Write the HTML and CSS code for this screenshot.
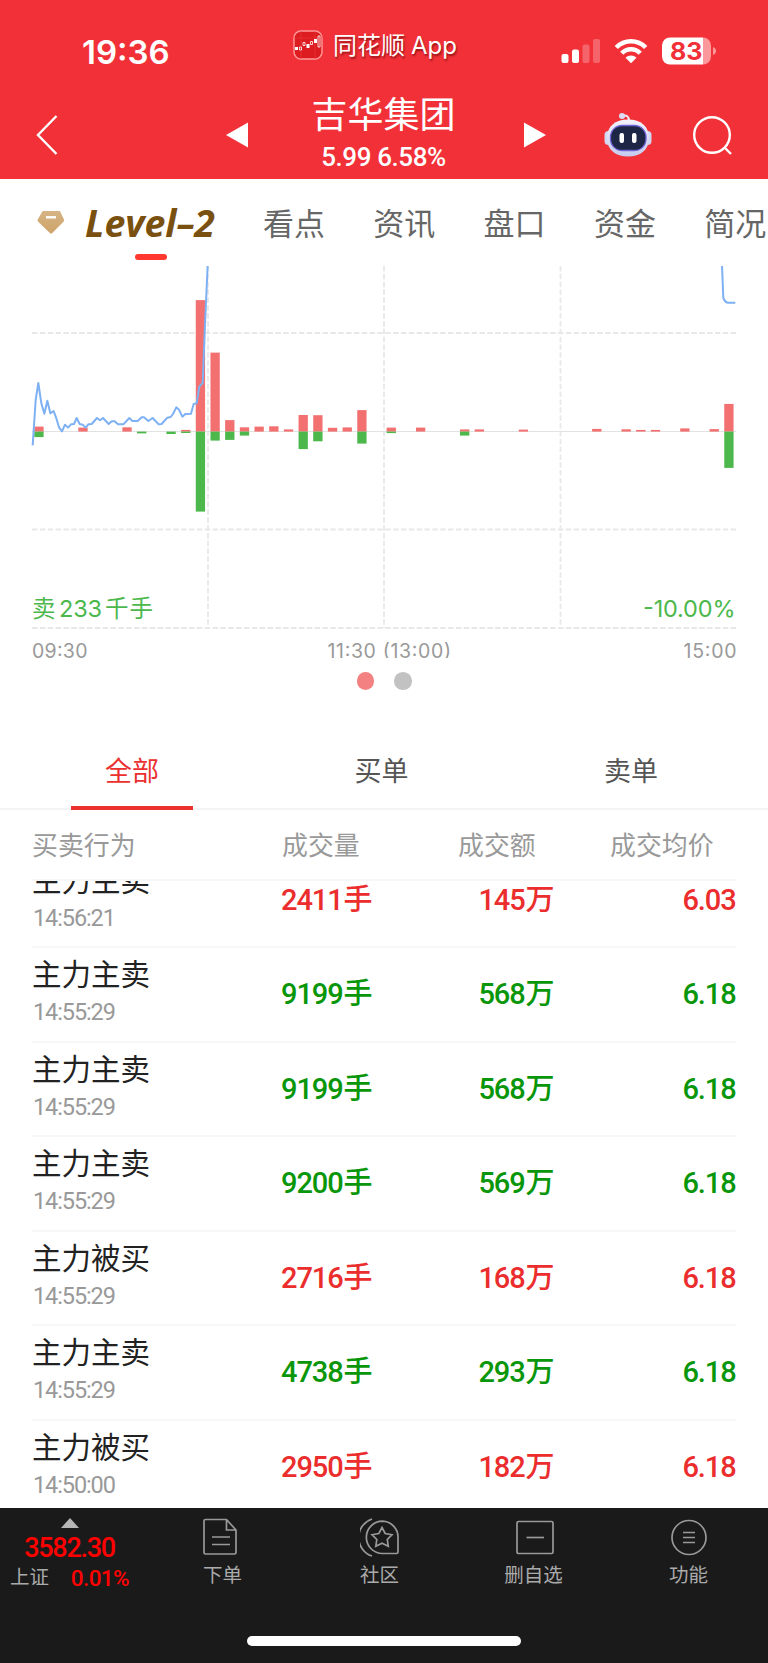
FILE: index.html
```html
<!DOCTYPE html>
<html lang="zh-CN">
<head>
  <meta charset="UTF-8" />
  <meta name="viewport" content="width=device-width, initial-scale=1.0"/>
  <title>吉华集团</title>
  <link rel="stylesheet" href="styles.css">
</head>
<body>

  <header class="header">
    <div class="status">
      <span class="clock">19:36</span>
      <div class="app">
        <svg class="app-icon" width="30" height="30" viewBox="0 0 30 30">
          <rect x="1" y="1" width="28" height="28" rx="7" fill="#dc1c20" stroke="#ff9a9a" stroke-width="1.4"/>
          <path d="M1 8h28M8 1v28M22 1v28" stroke="#ef3b3e" stroke-width=".6"/>
          <path d="M2 17h3v3H2zM13.500 14h3v4h-3zM21 9h3v4h-3z" fill="#fff"/>
          <path d="M6.500 17h2v3h-2zM10 12.500h2v3h-2zM17.500 11.500h2v3h-2zM25 6h2v11h-2z" fill="none" stroke="#fff" stroke-width=".8"/>
        </svg>
        <span>同花顺<i>App</i></span>
      </div>
      <svg class="signals" width="160" height="30" viewBox="0 0 160 30">
        <g fill="#fff">
          <rect x="1.500" y="17" width="7" height="9" rx="2"/>
          <rect x="12" y="12.500" width="7" height="13.500" rx="2"/>
          <rect x="22.500" y="7.500" width="7" height="18.500" rx="2" opacity=".25"/>
          <rect x="33" y="2" width="7" height="24" rx="2" opacity=".25"/>
        </g>
        <g fill="none" stroke="#fff" stroke-width="4.600">
          <path d="M56.300 10.500a20.500 20.500 0 0 1 29.400 0"/>
          <path d="M61.800 16.300a12.600 12.600 0 0 1 18.400 0"/>
        </g>
        <path d="M65.500 20.800a7.500 7.500 0 0 1 11 0L71 26.200z" fill="#fff"/>
        <path d="M110 .500h33v27h-33a8 8 0 0 1-8-8v-11a8 8 0 0 1 8-8z" fill="#fff"/>
        <path d="M143 .500a8 8 0 0 1 8 8v11a8 8 0 0 1-8 8z" fill="#fa989c"/>
        <path d="M153 10q3 1.200 3 4t-3 4z" fill="#fa989c"/>
        <text x="110" y="22.500" textLength="32.500" lengthAdjust="spacingAndGlyphs">83</text>
      </svg>
    </div>

    <div class="nav">
      <svg class="back" width="24" height="44" viewBox="0 0 24 44"><path d="M21.500 3L3 22l18.500 19"/></svg>
      <svg class="prev" width="22" height="26" viewBox="0 0 22 26"><path d="M0 13L22 .500v25z"/></svg>
      <div class="title">
        <h1>吉华集团</h1>
        <p>5.99 6.58%</p>
      </div>
      <svg class="next" width="22" height="26" viewBox="0 0 22 26"><path d="M22 13L0 .500v25z"/></svg>
      <svg class="robot" width="48" height="46" viewBox="0 0 48 46">
        <defs>
          <linearGradient id="shell" x1="0" y1="0" x2="0" y2="1">
            <stop offset="0" stop-color="#f3f2fc"/>
            <stop offset="1" stop-color="#c6caee"/>
          </linearGradient>
        </defs>
        <path d="M18 5q7-2 7 5" fill="none" stroke="#eaeaf8" stroke-width="2"/>
        <circle cx="18" cy="5" r="3" fill="#dcdcf2"/>
        <rect x=".500" y="20" width="8" height="14" rx="4" fill="#d3d6f0"/>
        <rect x="39.500" y="20" width="8" height="14" rx="4" fill="#d3d6f0"/>
        <path d="M24 8.500c13 0 21 7 21 18.500S37 45.500 24 45.500 3 38.500 3 27 11 8.500 24 8.500z" fill="url(#shell)"/>
        <rect x="6.500" y="14.500" width="35.500" height="25" rx="11.500" fill="#1d2745" stroke="#7163d6" stroke-width="1.300"/>
        <rect x="15.500" y="22" width="4.500" height="10" rx="2" fill="#fff"/>
        <rect x="28" y="22" width="4.500" height="10" rx="2" fill="#fff"/>
      </svg>
      <svg class="search" width="40" height="40" viewBox="0 0 40 40"><circle cx="19" cy="19" r="17.800"/><path d="M31.500 31.500l6.500 6.500"/></svg>
    </div>
  </header>

  <nav class="tabs">
    <div class="level2">
      <svg width="28" height="26" viewBox="0 0 28 26">
        <defs>
          <linearGradient id="gold" x1="0" y1="0" x2="0" y2="1">
            <stop offset="0" stop-color="#d6b485"/>
            <stop offset="1" stop-color="#cda368"/>
          </linearGradient>
        </defs>
        <path d="M6.500 1h15.500q1 0 1.500 1l3.500 7.500q.500 1-.300 2L15 23.300q-.900.900-1.800 0L.900 11.500q-.600-1-.200-2L5 2q.500-1 1.500-1z" fill="url(#gold)"/>
        <path d="M9 7.300h10" stroke="#fff" stroke-width="2.400"/>
      </svg>
      <svg class="level2-name" width="136" height="56" viewBox="0 0 136 56">
        <text x="1" y="41.500" textLength="130" lengthAdjust="spacingAndGlyphs">Level–2</text>
      </svg>
    </div>
    <a>看点</a>
    <a>资讯</a>
    <a>盘口</a>
    <a>资金</a>
    <a>简况</a>
  </nav>

  <svg class="chart" width="768" height="392" viewBox="0 0 768 392">
    <g class="grid">
      <path d="M32 67H736M32 263.500H736M32 362H736"/>
      <path d="M208 0V362M384 0V362M560.500 0V362"/>
    </g>
    <path class="axis" d="M32 165.500H736"/>
    <g id="bars"></g>
    <g class="price" transform="translate(0 -6) scale(.33333)">
      <path d="M98 556L107 420 115 369 124 430 133 461 142 422 151 460 161 453 168 472 177 502 186 514 195 494 204 503 213 493 222 492 230 474 239 492 248 494 257 503 265 493 275 492 291 474 300 481 309 474 326 492 335 484 344 484 354 493 370 493 388 474 397 483 413 483 425 472 432 472 445 483 458 474 476 493 485 492 502 473 512 471 519 462 529 442 537 449 547 470 556 462 573 461 581 432 590 430 598 380 608 369 614 220 623 15"/>
      <path d="M2166 15L2170 114Q2176 128 2184 128H2206"/>
    </g>
    <g class="limits">
      <text x="32" y="351" textLength="22">卖</text>
      <text x="59" y="351" textLength="43">233</text>
      <text x="105" y="351" textLength="48">千手</text>
      <text x="643" y="351" textLength="92.500">-10.00%</text>
    </g>
    <g class="times">
      <text x="32" y="391.500" textLength="55.500">09:30</text>
      <text x="327.500" y="391.500" textLength="123.500">11:30 (13:00)</text>
      <text x="683.500" y="391.500" textLength="53">15:00</text>
    </g>
  </svg>

  <div class="dots"><span class="dot on"></span><span class="dot"></span></div>

  <div class="filters">
    <a class="active">全部</a>
    <a>买单</a>
    <a>卖单</a>
  </div>

  <div class="table-head">
    <span>买卖行为</span>
    <span>成交量</span>
    <span>成交额</span>
    <span>成交均价</span>
  </div>

  <div class="list">
    <div class="row up">
      <div><h3>主力主卖</h3><time>14:56:21</time></div>
      <b>2411<i>手</i></b><b>145<i>万</i></b><b>6.03</b>
    </div>
    <div class="row down">
      <div><h3>主力主卖</h3><time>14:55:29</time></div>
      <b>9199<i>手</i></b><b>568<i>万</i></b><b>6.18</b>
    </div>
    <div class="row down">
      <div><h3>主力主卖</h3><time>14:55:29</time></div>
      <b>9199<i>手</i></b><b>568<i>万</i></b><b>6.18</b>
    </div>
    <div class="row down">
      <div><h3>主力主卖</h3><time>14:55:29</time></div>
      <b>9200<i>手</i></b><b>569<i>万</i></b><b>6.18</b>
    </div>
    <div class="row up">
      <div><h3>主力被买</h3><time>14:55:29</time></div>
      <b>2716<i>手</i></b><b>168<i>万</i></b><b>6.18</b>
    </div>
    <div class="row down">
      <div><h3>主力主卖</h3><time>14:55:29</time></div>
      <b>4738<i>手</i></b><b>293<i>万</i></b><b>6.18</b>
    </div>
    <div class="row up">
      <div><h3>主力被买</h3><time>14:50:00</time></div>
      <b>2950<i>手</i></b><b>182<i>万</i></b><b>6.18</b>
    </div>
  </div>

  <footer class="footer">
    <div class="toolbar">
      <div class="index">
        <svg width="18" height="10" viewBox="0 0 18 10"><path d="M9 0l9 10H0z"/></svg>
        <strong>3582.30</strong>
        <p><span>上证</span><em>0.01%</em></p>
      </div>
      <a class="order">
        <svg width="40" height="40" viewBox="0 0 40 40"><path d="M4 2.500h21.500l9.500 10.500v22.500q0 1.500-1.500 1.500h-29q-1.500 0-1.500-1.500V4q0-1.500 1.500-1.500M25.500 2.500V13H35M11 20h18M11 27.500h18"/></svg>
        <span>下单</span>
      </a>
      <a class="club">
        <svg width="40" height="40" viewBox="0 0 40 40"><path d="M22.500 4.200A16 16 0 1 0 22.500 36.500H36.500q1.500 0 1.500-1.500V20.500A16 16 0 0 0 22.500 4.200zM12 2a19.500 19.500 0 0 0 0 37M22 10.500l3.200 6 6.800 1.200-4.700 4.800 1 6.800-6.300-3-6.200 3 1-6.800-4.800-4.800 6.800-1.200z"/></svg>
        <span>社区</span>
      </a>
      <a class="remove">
        <svg width="40" height="40" viewBox="0 0 40 40"><rect x="2" y="4.500" width="36" height="32" rx="1.500"/><path d="M11.500 20.500h17.500"/></svg>
        <span>删自选</span>
      </a>
      <a class="more">
        <svg width="40" height="40" viewBox="0 0 40 40"><circle cx="20" cy="20.500" r="17"/><path d="M14 15.500h12M14 20.500h12M14 25.500h12"/></svg>
        <span>功能</span>
      </a>
    </div>
    <div class="home-bar"></div>
  </footer>

  <script>
    // [slot, buy height, sell height]
    const volumes = [
      [0, 5, 5.5], [3, 4, 0], [6, 4.3, 0], [7, 0, 1.8], [9, 0, 2.4], [10, 1.7, 1.4],
      [11, 131.5, 80], [12, 79, 9], [13, 11.5, 8.3], [14, 4.3, 4], [15, 5, 0], [16, 5.3, 0],
      [17, 2.2, 0], [18, 16.6, 17.5], [19, 16.4, 9.7], [20, 3.8, 0], [21, 4.2, 0],
      [22, 21.5, 12], [24, 4, 1.5], [26, 4, 0], [29, 2.2, 4], [30, 2.2, 0], [33, 2, 0],
      [38, 2.7, 0], [40, 2.3, 0], [41, 1.7, 0], [42, 1.7, 0], [44, 3.2, 0], [46, 2.5, 0],
      [47, 27.7, 36.3]
    ];
    const base = 165.6;

    document.getElementById("bars").innerHTML = volumes.map(([slot, buy, sell]) => {
      const x = 34.3 + slot * 14.68;
      return `<rect class="buy" x="${x}" y="${base - buy}" width="9.3" height="${buy}"/>
        <rect class="sell" x="${x}" y="${base}" width="9.3" height="${sell}"/>`;
    }).join("");
  </script>

</body>
</html>
```
FILE: styles.css
```css
body {
  margin: 0;
  width: 768px;
  height: 1663px;
  overflow: hidden;
  background-color: #fff;
  font-family: Roboto, "Noto Sans CJK SC", sans-serif;
}

h1, h3, p {
  margin: 0;
  font-weight: 400;
}

svg {
  display: block;
  flex: none;
}

.header {
  height: 179px;
  background-color: #f23038;
  color: #fff;
}

.status {
  display: flex;
  align-items: flex-start;
  height: 92px;
}

.clock {
  width: 211px;
  padding: 31px 0 0 82px;
  font: 600 33px/42px Inter, sans-serif;
}

.app {
  display: flex;
  width: 267px;
  padding-top: 30px;
  font-size: 24px;
  line-height: 31px;
  text-shadow: 1px 2px 2px rgba(90, 0, 0, 0.6);
}

.app-icon {
  margin-right: 10px;
}

.app i {
  margin-left: 6px;
  font-family: Inter, sans-serif;
  font-size: 24px;
  font-style: normal;
}

.signals {
  margin-top: 37px;
}

.signals text {
  font: 700 24px Inter, sans-serif;
  fill: #f23038;
}

.nav {
  display: flex;
  align-items: flex-start;
}

.nav .back {
  margin: 21px 0 0 35px;
  fill: none;
  stroke: #fff;
  stroke-width: 2.4;
}

.nav .prev {
  margin: 29.5px 0 0 167px;
  fill: #fff;
}

.nav .next {
  margin: 29.5px 0 0 0;
  fill: #fff;
}

.title {
  width: 271px;
  padding: 2px 5px 0 0;
  text-align: center;
}

.title h1 {
  font-size: 36px;
  line-height: 44px;
}

.title p {
  font-size: 26px;
  font-weight: 500;
  line-height: 38px;
  letter-spacing: -0.4px;
}

.nav .robot {
  margin: 19px 0 0 58px;
}

.nav .search {
  margin: 24px 0 0 41px;
  fill: none;
  stroke: #fff;
  stroke-width: 2.4;
}

.tabs {
  display: flex;
  height: 87px;
  overflow: hidden;
  color: #666;
}

.tabs a {
  flex: none;
  width: 110.3px;
  font-size: 31px;
  line-height: 91px;
}

.level2 {
  position: relative;
  display: flex;
  align-items: flex-start;
  flex: none;
  width: 226px;
  padding: 31px 0 0 37px;
}

.level2::after {
  content: "";
  position: absolute;
  left: 135px;
  top: 75px;
  width: 32px;
  height: 6px;
  border-radius: 3px;
  background-color: #ff3830;
}

.level2-name {
  margin: -15px 0 0 19px;
}

.level2-name text {
  font: italic 700 38px "Open Sans", sans-serif;
  fill: #7a5010;
}

.grid path {
  fill: none;
  stroke: #e8e8e8;
  stroke-width: 1.8;
  stroke-dasharray: 5.5 2.35;
}

.axis {
  stroke: #e2e2e2;
  stroke-width: 1.2;
}

.buy {
  fill: #f27070;
}

.sell {
  fill: #4cb84c;
}

.price path {
  fill: none;
  stroke: #7db1f3;
  stroke-width: 6;
  stroke-linejoin: round;
}

.limits text {
  font: 400 23.5px Inter, "Noto Sans CJK SC", sans-serif;
  fill: #4cb84c;
}

.times text {
  font: 400 19.5px Inter, sans-serif;
  fill: #999;
}

.dots {
  display: flex;
  justify-content: center;
  gap: 20px;
  height: 71.5px;
  padding-top: 14px;
  box-sizing: border-box;
}

.dot {
  width: 17.5px;
  height: 17.5px;
  border-radius: 50%;
  background-color: #c2c2c2;
}

.dot.on {
  background-color: #f38181;
}

.filters {
  display: flex;
  justify-content: space-between;
  height: 78px;
  padding: 0 76px 0 71px;
  border-bottom: 2px solid #f4f4f4;
}

.filters a {
  width: 122px;
  height: 76px;
  border-bottom: 4px solid transparent;
  color: #555;
  font-size: 27px;
  line-height: 85px;
  text-align: center;
}

.filters a.active {
  border-color: #eb3030;
  color: #eb3030;
}

.table-head {
  display: grid;
  grid-template-columns: 250px 176px 152px 1fr;
  height: 69px;
  margin: 0 32px;
  border-bottom: 2px solid #f7f7f7;
  color: #999;
  font-size: 25.9px;
  line-height: 73px;
}

.list {
  height: 627.5px;
  overflow: hidden;
}

.row {
  display: grid;
  grid-template-columns: 249px 1fr 182px 182px;
  height: 92.5px;
  margin: 0 32px;
  border-bottom: 2px solid #f7f7f7;
}

.row:first-child {
  margin-top: -27px;
}

.row h3 {
  padding-top: 7px;
  color: #222;
  font-size: 29.5px;
  line-height: 40px;
}

.row time {
  display: block;
  padding: 1px 0 0 1px;
  color: #999;
  font-size: 23.5px;
  line-height: 32px;
  letter-spacing: -1.1px;
}

.row b {
  font-size: 29px;
  font-weight: 500;
  line-height: 93px;
  letter-spacing: -1.1px;
  white-space: nowrap;
}

.row b i {
  margin-left: 1px;
  font-style: normal;
  letter-spacing: 0;
}

.row b:nth-child(3),
.row b:nth-child(4) {
  text-align: right;
}

.row b:nth-child(4) {
  padding-right: 1px;
}

.up b {
  color: #eb2d2d;
}

.down b {
  color: #0a960a;
}

.footer {
  height: 155px;
  background-color: #1a1a1a;
  color: #aaa;
}

.toolbar {
  display: flex;
  height: 128px;
}

.index {
  width: 139px;
  padding-top: 10px;
  color: #f00;
  text-align: center;
}

.index svg {
  margin: 0 auto;
  fill: #b5b5b5;
}

.index strong {
  display: block;
  font-size: 27px;
  font-weight: 500;
  line-height: 40px;
  letter-spacing: -1.3px;
}

.index p {
  display: flex;
  justify-content: space-between;
  padding: 0 10px;
  line-height: 20px;
}

.index span {
  color: #aaa;
  font-size: 19.5px;
}

.index em {
  font-size: 22.5px;
  font-style: normal;
  font-weight: 500;
  letter-spacing: -0.6px;
}

.toolbar a {
  display: flex;
  flex-direction: column;
  align-items: center;
  width: 156px;
  padding-top: 9px;
  font-size: 19.5px;
  line-height: 37px;
}

.toolbar a svg {
  fill: none;
  stroke: #999;
  stroke-width: 1.7;
}

.toolbar .order {
  width: 167px;
}

.toolbar .order svg {
  margin-right: 3px;
}

.toolbar .club {
  width: 147px;
}

.toolbar .remove {
  width: 161px;
}

.toolbar .remove svg {
  margin-left: 2px;
}

.toolbar .more {
  width: 149px;
}

.home-bar {
  width: 274px;
  height: 10px;
  margin: 0 auto;
  border-radius: 5px;
  background-color: #fff;
}
```
